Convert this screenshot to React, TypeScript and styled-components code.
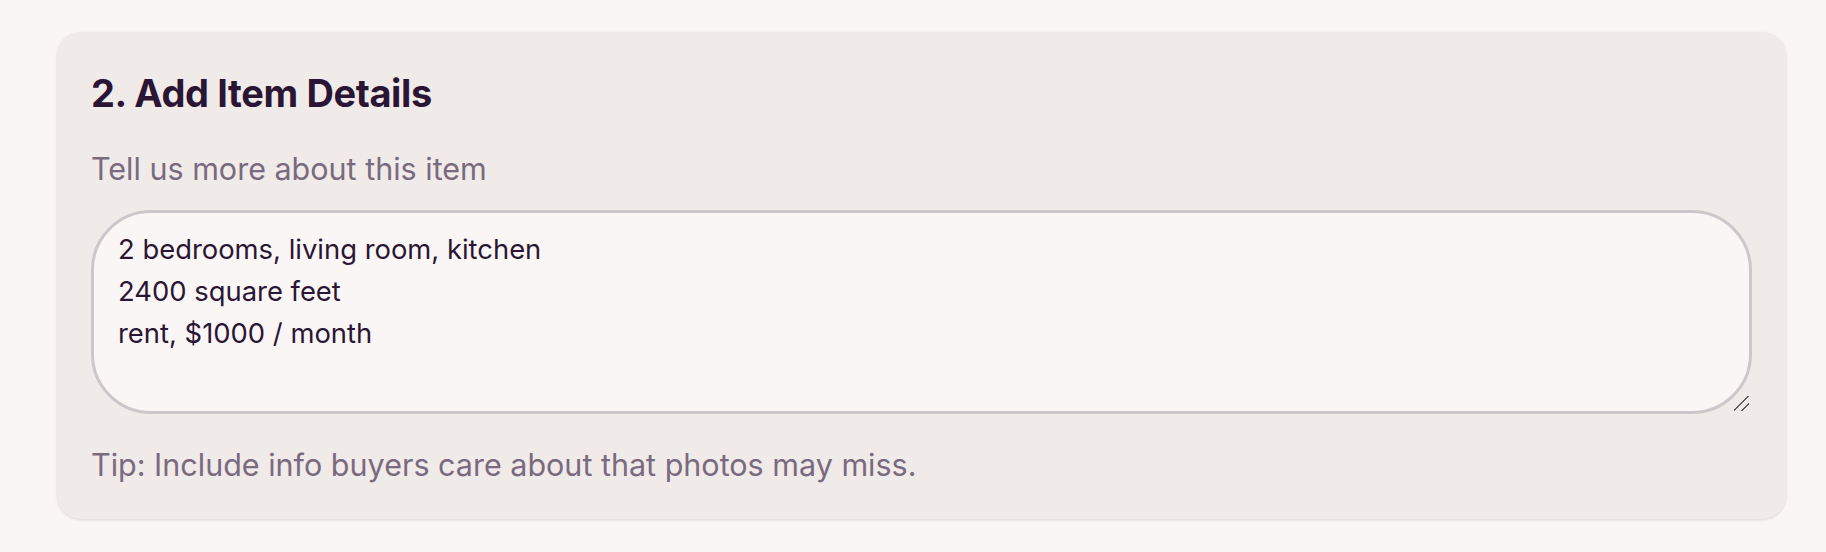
import * as React from "react";
import styled, { createGlobalStyle } from "styled-components";

const GlobalStyle = createGlobalStyle`
  html, body {
    margin: 0;
    padding: 0;
    background: #faf6f5;
  }
  body {
    font-family: Inter, "Noto Sans", "Liberation Sans", sans-serif;
    -webkit-font-smoothing: antialiased;
  }
`;

const Page = styled.main`
  padding: 32px 40px 32px 57px;
`;

const Card = styled.section`
  display: flex;
  flex-direction: column;
  background: #f0ebe8;
  border-radius: 24px;
  padding: 38px 34px 34px;
  box-shadow: 0 1px 3px rgba(60, 40, 50, 0.1), 0 1px 2px rgba(60, 40, 50, 0.05);
`;

const Title = styled.h2`
  margin: 0;
  font-size: 38px;
  line-height: 46px;
  font-weight: 700;
  letter-spacing: -0.01em;
  color: #2a1634;
`;

const Hint = styled.p<{ $gap: number }>`
  margin: ${(p) => p.$gap}px 0 0;
  font-size: 30.5px;
  line-height: 40px;
  font-weight: 400;
  color: #7a6a80;
`;

const Details = styled.textarea`
  box-sizing: border-box;
  width: 100%;
  height: 204px;
  margin-top: 21px;
  padding: 15px 24px;
  border: 3px solid #cdc6cb;
  border-radius: 60px;
  background: #faf6f5;
  color: #2a1634;
  font-family: inherit;
  font-size: 27.4px;
  line-height: 42px;
  outline: none;
  resize: vertical;

  &::-webkit-scrollbar {
    width: 16px;
    height: 16px;
    background: transparent;
  }
  &::-webkit-resizer {
    background: linear-gradient(
      135deg,
      transparent 46%,
      #5c5c5c 46%,
      #5c5c5c 53%,
      transparent 53%,
      transparent 71%,
      #5c5c5c 71%,
      #5c5c5c 78%,
      transparent 78%
    );
  }
`;

const initialText = "2 bedrooms, living room, kitchen\n2400 square feet\nrent, $1000 / month";

export default function App() {
  const [text, setText] = React.useState(initialText);

  return (
    <Page>
      <GlobalStyle />
      <Card>
        <Title>2. Add Item Details</Title>
        <Hint $gap={33}>Tell us more about this item</Hint>
        <Details value={text} onChange={(e) => setText(e.target.value)} />
        <Hint $gap={31}>Tip: Include info buyers care about that photos may miss.</Hint>
      </Card>
    </Page>
  );
}
